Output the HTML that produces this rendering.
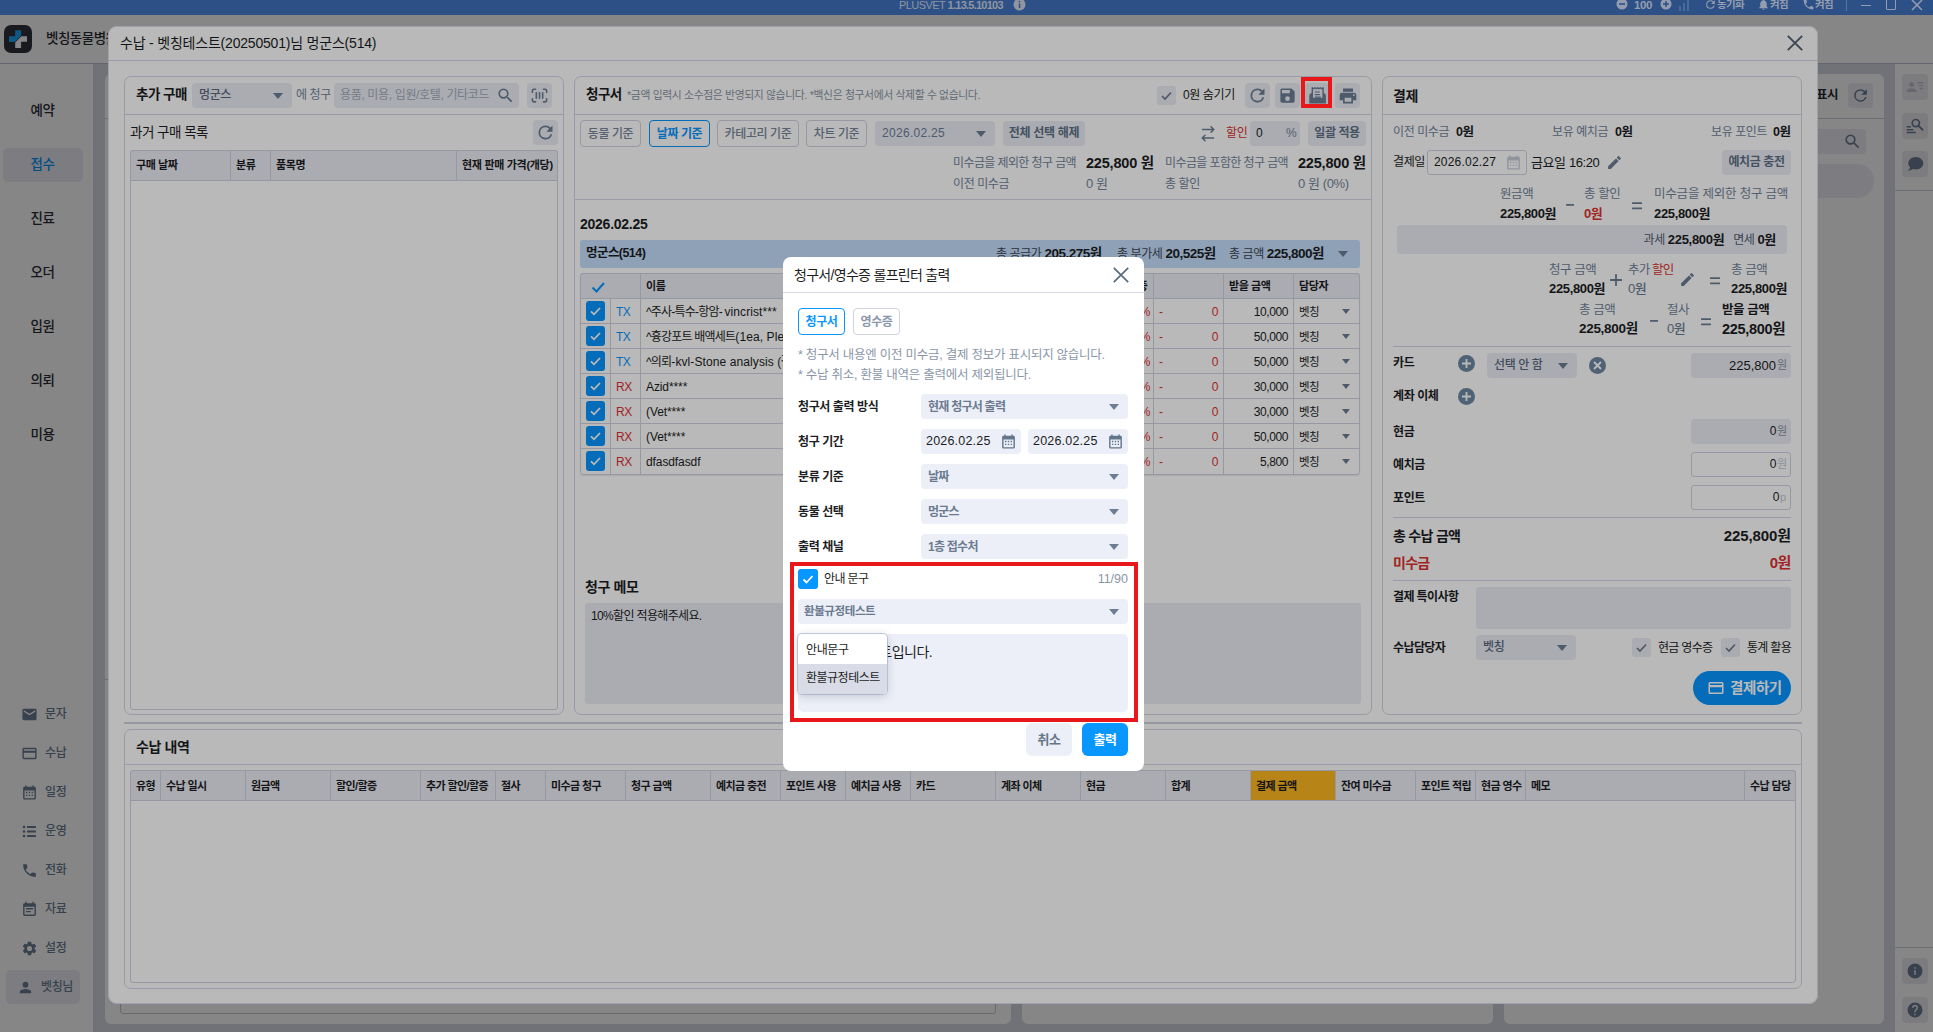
<!DOCTYPE html>
<html lang="ko">
<head>
<meta charset="utf-8">
<title>PLUSVET</title>
<style>
*{box-sizing:border-box;margin:0;padding:0}
html,body{width:1933px;height:1032px;overflow:hidden;background:#fff}
body{position:relative;font-family:"Liberation Sans","Noto Sans CJK KR",sans-serif;font-size:12px;color:#1c1e24;letter-spacing:-.4px;-webkit-font-smoothing:antialiased}
.a{position:absolute;white-space:nowrap}
.b{font-weight:700}
.m{font-weight:500}
.g{color:#72849b}
.r{color:#e03131}
.bl{color:#0896ff}
.ov{position:absolute;left:0;top:15px;width:1933px;height:1017px;background:rgba(0,0,0,.275)}
.panel{position:absolute;border:1px solid #d3d7e3;border-radius:7px;background:#fff}
.hl{position:absolute;height:1px;background:#d3d7e3}
.vl{position:absolute;width:1px;background:#d3d7e3}
.inp{position:absolute;background:#ecedf5;border-radius:4px}
.btn{position:absolute;background:#ecedf5;border-radius:4px;text-align:center;color:#5f7186;font-weight:700}
.obtn{position:absolute;border:1px solid #cfd3df;border-radius:4px;text-align:center;color:#7a8698;font-weight:500;background:#fff}
.th{position:absolute;background:#ecedf5;border:1px solid #cfd3df}
.tri{position:absolute;width:0;height:0;border-left:5px solid transparent;border-right:5px solid transparent;border-top:6px solid #6b7e95}
.tris{position:absolute;width:0;height:0;border-left:4px solid transparent;border-right:4px solid transparent;border-top:5px solid #6b7e95}
.cb{position:absolute;width:19px;height:19px;border-radius:3px;background:#0896ff}
.cb svg,.cbg svg{position:absolute;left:0;top:0}
.cbg{position:absolute;width:19px;height:19px;border-radius:3px;background:#ecedf5}
svg{display:block}
</style>
</head>
<body>
<!-- ===== native title bar ===== -->
<div class="a" style="left:0;top:0;width:1933px;height:15px;background:#2d5186;z-index:50;overflow:hidden">
  <div class="a" style="left:899px;top:-2.500px;font-size:11px;line-height:15px;color:#9095a0;letter-spacing:-.55px">PLUSVET <span class="b" style="letter-spacing:-.75px">1.13.5.10103</span></div>
  <svg class="a" style="left:1013px;top:-2px" width="13" height="13" viewBox="0 0 13 13"><circle cx="6.5" cy="6.5" r="6" fill="#9095a0"/><rect x="5.8" y="5.5" width="1.5" height="4.5" fill="#2d5186"/><circle cx="6.5" cy="3.6" r=".9" fill="#2d5186"/></svg>
  <svg class="a" style="left:1616px;top:-2px" width="12" height="12" viewBox="0 0 12 12"><circle cx="6" cy="6" r="5.5" fill="#949db0"/><rect x="3" y="5.2" width="6" height="1.6" fill="#2d5186"/></svg>
  <div class="a b" style="left:1634px;top:-2.500px;font-size:11.500px;line-height:15px;color:#949db0">100</div>
  <svg class="a" style="left:1660px;top:-2px" width="12" height="12" viewBox="0 0 12 12"><circle cx="6" cy="6" r="5.5" fill="#949db0"/><rect x="3" y="5.2" width="6" height="1.6" fill="#2d5186"/><rect x="5.2" y="3" width="1.6" height="6" fill="#2d5186"/></svg>
  <svg class="a" style="left:1679px;top:0" width="12" height="11" viewBox="0 0 12 11"><rect x="0" y="6" width="2" height="5" fill="#4a6a99"/><rect x="4" y="3" width="2" height="8" fill="#4a6a99"/><rect x="8" y="0" width="2" height="11" fill="#4a6a99"/></svg>
  <svg class="a" style="left:1704px;top:-2px" width="13" height="13" viewBox="0 0 24 24"><path d="M17.65 6.35A7.96 7.96 0 0 0 12 4a8 8 0 1 0 7.73 10h-2.08A6 6 0 1 1 12 6c1.66 0 3.14.69 4.22 1.78L13 11h7V4z" fill="#949db0"/></svg>
  <div class="a b" style="left:1717px;top:-3px;font-size:10.500px;line-height:15px;color:#949db0;letter-spacing:-.6px">동기화</div>
  <svg class="a" style="left:1757px;top:-2px" width="13" height="13" viewBox="0 0 24 24"><path d="M12 22a2 2 0 0 0 2-2h-4a2 2 0 0 0 2 2zm6-6v-5c0-3.07-1.64-5.64-4.5-6.32V4a1.5 1.5 0 0 0-3 0v.68C7.63 5.36 6 7.92 6 11v5l-2 2v1h16v-1z" fill="#949db0"/></svg>
  <div class="a b" style="left:1770px;top:-3px;font-size:10.500px;line-height:15px;color:#949db0;letter-spacing:-.6px">켜짐</div>
  <svg class="a" style="left:1802px;top:-2px" width="13" height="13" viewBox="0 0 24 24"><path d="M6.62 10.79a15.05 15.05 0 0 0 6.59 6.59l2.2-2.2a1 1 0 0 1 1.02-.24c1.12.37 2.33.57 3.57.57a1 1 0 0 1 1 1V20a1 1 0 0 1-1 1A17 17 0 0 1 3 4a1 1 0 0 1 1-1h3.5a1 1 0 0 1 1 1c0 1.25.2 2.45.57 3.57a1 1 0 0 1-.25 1.02z" fill="#949db0"/></svg>
  <div class="a b" style="left:1815px;top:-3px;font-size:10.500px;line-height:15px;color:#949db0;letter-spacing:-.6px">켜짐</div>
  <div class="a" style="left:1846px;top:0;width:1px;height:11px;background:#5776a3"></div>
  <div class="a" style="left:1861px;top:4.500px;width:10px;height:1.500px;background:#949db0"></div>
  <div class="a" style="left:1886px;top:-1px;width:10px;height:11px;border:1.500px solid #949db0;border-radius:1px"></div>
  <svg class="a" style="left:1911px;top:-1px" width="12" height="12" viewBox="0 0 12 12"><path d="M1 1L11 11M11 1L1 11" stroke="#949db0" stroke-width="1.5"/></svg>
</div>

<!-- ===== app behind ===== -->
<div class="a" style="left:0;top:15px;width:1933px;height:1017px;background:#fff">
  <!-- content bg -->
  <div class="a" style="left:93px;top:48px;width:1802px;height:969px;background:#d7d9e2"></div>
  <!-- header -->
  <div class="a" style="left:0;top:0;width:1933px;height:49px;background:#fff;border-bottom:1px solid #c3c6d2"></div>
  <div class="a" style="left:4px;top:10px;width:28px;height:28px;border-radius:7px;background:#30343e">
    <svg width="28" height="28" viewBox="0 0 28 28"><path d="M11.200 5.300h5.900v5.300L10.900 17.100H5v-5.900h6.200z" fill="#1ea7ff"/><path d="M23 11.200v5.600h-5.900V23h-5.900v-5.600l6.200-6.200z" fill="#fff"/></svg>
  </div>
  <div class="a m" style="left:46px;top:13px;font-size:13.500px;line-height:22px;color:#2a2d35;letter-spacing:-.5px">벳칭동물병원</div>
  <!-- left sidebar -->
  <div class="a" style="left:0;top:49px;width:93px;height:968px;background:#fff"></div>
  <div class="a" style="left:3px;top:133px;width:80px;height:34px;border-radius:5px;background:#ecedf5"></div>
  <div class="a m" style="left:0;top:85px;width:85px;text-align:center;font-size:13.500px;line-height:22px;color:#2a2d35">예약</div>
  <div class="a m" style="left:0;top:139px;width:85px;text-align:center;font-size:13.500px;line-height:22px;color:#0896ff">접수</div>
  <div class="a m" style="left:0;top:193px;width:85px;text-align:center;font-size:13.500px;line-height:22px;color:#2a2d35">진료</div>
  <div class="a m" style="left:0;top:247px;width:85px;text-align:center;font-size:13.500px;line-height:22px;color:#2a2d35">오더</div>
  <div class="a m" style="left:0;top:301px;width:85px;text-align:center;font-size:13.500px;line-height:22px;color:#2a2d35">입원</div>
  <div class="a m" style="left:0;top:355px;width:85px;text-align:center;font-size:13.500px;line-height:22px;color:#2a2d35">의뢰</div>
  <div class="a m" style="left:0;top:409px;width:85px;text-align:center;font-size:13.500px;line-height:22px;color:#2a2d35">미용</div>
  <!-- bottom nav -->
  <div class="a" style="left:6px;top:955px;width:74px;height:34px;border-radius:5px;background:#ecedf5"></div>
  <svg class="a" style="left:21px;top:691px" width="17" height="17" viewBox="0 0 24 24"><path d="M20 4H4a2 2 0 0 0-2 2v12a2 2 0 0 0 2 2h16a2 2 0 0 0 2-2V6a2 2 0 0 0-2-2zm0 4l-8 5-8-5V6l8 5 8-5z" fill="#6b7e95"/></svg>
  <div class="a m" style="left:45px;top:689px;font-size:12px;line-height:20px;color:#6b7e95">문자</div>
  <svg class="a" style="left:21px;top:730px" width="17" height="17" viewBox="0 0 24 24"><path d="M20 4H4a2 2 0 0 0-2 2v12a2 2 0 0 0 2 2h16a2 2 0 0 0 2-2V6a2 2 0 0 0-2-2zm0 14H4v-7h16zm0-10H4V6h16z" fill="#6b7e95"/></svg>
  <div class="a m" style="left:45px;top:728px;font-size:12px;line-height:20px;color:#6b7e95">수납</div>
  <svg class="a" style="left:21px;top:769px" width="17" height="17" viewBox="0 0 24 24"><path d="M19 4h-1V2h-2v2H8V2H6v2H5a2 2 0 0 0-2 2v14a2 2 0 0 0 2 2h14a2 2 0 0 0 2-2V6a2 2 0 0 0-2-2zm0 16H5V9h14zM7 11h2v2H7zm4 0h2v2h-2zm4 0h2v2h-2zM7 15h2v2H7zm4 0h2v2h-2zm4 0h2v2h-2z" fill="#6b7e95"/></svg>
  <div class="a m" style="left:45px;top:767px;font-size:12px;line-height:20px;color:#6b7e95">일정</div>
  <svg class="a" style="left:21px;top:808px" width="17" height="17" viewBox="0 0 17 17" fill="#6b7e95"><circle cx="3" cy="4" r="1.300"/><circle cx="3" cy="8.500" r="1.300"/><circle cx="3" cy="13" r="1.300"/><rect x="6" y="3.100" width="9" height="1.800" rx=".5"/><rect x="6" y="7.600" width="9" height="1.800" rx=".5"/><rect x="6" y="12.100" width="9" height="1.800" rx=".5"/></svg>
  <div class="a m" style="left:45px;top:806px;font-size:12px;line-height:20px;color:#6b7e95">운영</div>
  <svg class="a" style="left:21px;top:847px" width="17" height="17" viewBox="0 0 24 24"><path d="M6.62 10.79a15.05 15.05 0 0 0 6.59 6.59l2.2-2.2a1 1 0 0 1 1.02-.24c1.12.37 2.33.57 3.57.57a1 1 0 0 1 1 1V20a1 1 0 0 1-1 1A17 17 0 0 1 3 4a1 1 0 0 1 1-1h3.5a1 1 0 0 1 1 1c0 1.25.2 2.45.57 3.57a1 1 0 0 1-.25 1.02z" fill="#6b7e95"/></svg>
  <div class="a m" style="left:45px;top:845px;font-size:12px;line-height:20px;color:#6b7e95">전화</div>
  <svg class="a" style="left:21px;top:886px" width="17" height="17" viewBox="0 0 24 24"><path d="M19 3h-1V1h-2v2H8V1H6v2H5a2 2 0 0 0-2 2v14a2 2 0 0 0 2 2h14a2 2 0 0 0 2-2V5a2 2 0 0 0-2-2zm0 16H5V8h14zM7 10h10v2H7zm0 4h7v2H7z" fill="#6b7e95"/></svg>
  <div class="a m" style="left:45px;top:884px;font-size:12px;line-height:20px;color:#6b7e95">자료</div>
  <svg class="a" style="left:21px;top:925px" width="17" height="17" viewBox="0 0 24 24"><path d="M19.14 12.94a7.07 7.07 0 0 0 0-1.88l2.03-1.58a.5.5 0 0 0 .12-.61l-1.92-3.32a.5.5 0 0 0-.59-.22l-2.39.96a7.03 7.03 0 0 0-1.62-.94l-.36-2.54a.48.48 0 0 0-.48-.41h-3.84a.48.48 0 0 0-.47.41l-.36 2.54c-.59.24-1.13.57-1.62.94l-2.39-.96a.5.5 0 0 0-.59.22L2.74 8.87a.48.48 0 0 0 .12.61l2.03 1.58a7.07 7.07 0 0 0 0 1.88l-2.03 1.58a.5.5 0 0 0-.12.61l1.92 3.32c.12.22.37.29.59.22l2.39-.96c.5.38 1.03.7 1.62.94l.36 2.54c.05.24.24.41.48.41h3.84c.24 0 .44-.17.47-.41l.36-2.54c.59-.24 1.13-.56 1.62-.94l2.39.96c.22.08.47 0 .59-.22l1.92-3.32a.5.5 0 0 0-.12-.61zM12 15.6a3.6 3.6 0 1 1 0-7.2 3.6 3.6 0 0 1 0 7.2z" fill="#6b7e95"/></svg>
  <div class="a m" style="left:45px;top:923px;font-size:12px;line-height:20px;color:#6b7e95">설정</div>
  <svg class="a" style="left:17px;top:964px" width="17" height="17" viewBox="0 0 24 24"><path d="M12 12a4 4 0 1 0 0-8 4 4 0 0 0 0 8zm0 2c-2.67 0-8 1.34-8 4v2h16v-2c0-2.66-5.33-4-8-4z" fill="#6b7e95"/></svg>
  <div class="a m" style="left:41px;top:962px;font-size:12px;line-height:20px;color:#6b7e95">벳칭님</div>

  <!-- content cards behind -->
  <div class="a" style="left:105px;top:59px;width:906px;height:950px;border-radius:6px;background:#fff"></div>
  <div class="a" style="left:105px;top:103px;width:20px;height:1px;background:#cdd0da"></div>
  <div class="a" style="left:105px;top:664px;width:20px;height:1px;background:#cdd0da"></div>
  <div class="a" style="left:120px;top:600px;width:876px;height:399px;border:1px solid #c4c8d3;border-radius:3px"></div>
  <div class="a" style="left:1022px;top:59px;width:471px;height:950px;border-radius:6px;background:#fff"></div>
  <div class="a" style="left:1504px;top:59px;width:380px;height:950px;border-radius:6px;background:#fff"></div>
  <div class="a" style="left:1504px;top:103px;width:380px;height:1px;background:#cdd0da"></div>
  <div class="a b" style="left:1816px;top:69px;font-size:12.500px;line-height:22px;color:#2a2d35;letter-spacing:-.6px">표시</div>
  <div class="a" style="left:1848px;top:68px;width:25px;height:25px;border-radius:4px;background:#ecedf5"></div>
  <svg class="a" style="left:1851px;top:71px" width="19" height="19" viewBox="0 0 24 24"><path d="M17.65 6.35A7.96 7.96 0 0 0 12 4a8 8 0 1 0 7.73 10h-2.08A6 6 0 1 1 12 6c1.66 0 3.14.69 4.22 1.78L13 11h7V4z" fill="#6b7e95"/></svg>
  <div class="a" style="left:1800px;top:114px;width:66px;height:25px;border-radius:4px;background:#ecedf5"></div>
  <svg class="a" style="left:1843px;top:117px" width="19" height="19" viewBox="0 0 24 24"><path d="M15.5 14h-.79l-.28-.27A6.47 6.47 0 0 0 16 9.5 6.5 6.5 0 1 0 9.5 16c1.61 0 3.09-.59 4.23-1.57l.27.28v.79l5 4.99L20.49 19zm-6 0C7.01 14 5 11.99 5 9.500S7.01 5 9.500 5 14 7.010 14 9.500 11.990 14 9.500 14z" fill="#6b7e95"/></svg>
  <div class="a" style="left:1780px;top:149px;width:94px;height:34px;border-radius:17px;background:#ecedf5"></div>

  <!-- right sidebar -->
  <div class="a" style="left:1895px;top:49px;width:38px;height:968px;background:#fff"></div>
  <div class="a" style="left:1902px;top:59px;width:26px;height:26px;border-radius:4px;background:#eceef3"></div>
  <svg class="a" style="left:1905px;top:62px" width="20" height="20" viewBox="0 0 24 24"><path d="M8 12a3 3 0 1 0 0-6 3 3 0 0 0 0 6zm0 1.500c-2 0-6 1-6 3V18h12v-1.500c0-2-4-3-6-3zM15 6h7v1.700h-7zm1.500 3.500H22v1.700h-5.500zm1 3.500H22v1.700h-4.500z" fill="#c4c7d0"/></svg>
  <div class="a" style="left:1902px;top:98px;width:26px;height:26px;border-radius:4px;background:#eceef3"></div>
  <svg class="a" style="left:1905px;top:101px" width="20" height="20" viewBox="0 0 24 24"><path d="M2 12h5v1.800H2zm0 3.500h8v1.800H2zm0 3.500h11v1.800H2z" fill="#6b7e95"/><circle cx="13" cy="8.500" r="4.300" fill="none" stroke="#6b7e95" stroke-width="2"/><path d="M16 11.500l5 5" stroke="#6b7e95" stroke-width="2.200" stroke-linecap="round"/></svg>
  <div class="a" style="left:1902px;top:136px;width:26px;height:26px;border-radius:4px;background:#eceef3"></div>
  <svg class="a" style="left:1905px;top:139px" width="20" height="20" viewBox="0 0 24 24"><path d="M13 3.500c-5 0-9 3.400-9 7.600 0 1.900.8 3.600 2.100 4.900-.3 1.500-1.100 2.800-2.600 3.800 2.400.1 4.400-.6 5.800-1.800 1.100.4 2.400.6 3.700.6 5 0 9-3.400 9-7.500s-4-7.600-9-7.600z" fill="#6c7d94"/></svg>
  <div class="a" style="left:1895px;top:175px;width:38px;height:1px;background:#cdd0da"></div>
  <div class="a" style="left:1895px;top:932px;width:38px;height:1px;background:#cdd0da"></div>
  <div class="a" style="left:1902px;top:943px;width:26px;height:26px;border-radius:4px;background:#eceef3"></div>
  <svg class="a" style="left:1906px;top:947px" width="18" height="18" viewBox="0 0 24 24"><path d="M12 2a10 10 0 1 0 0 20 10 10 0 0 0 0-20zm1 15h-2v-6h2zm0-8h-2V7h2z" fill="#6c7d94"/></svg>
  <div class="a" style="left:1902px;top:982px;width:26px;height:26px;border-radius:4px;background:#eceef3"></div>
  <svg class="a" style="left:1906px;top:986px" width="18" height="18" viewBox="0 0 24 24"><path d="M12 2a10 10 0 1 0 0 20 10 10 0 0 0 0-20zm1 17h-2v-2h2zm2.070-7.750l-.9.920C13.450 12.900 13 13.500 13 15h-2v-.500c0-1.100.45-2.100 1.170-2.830l1.240-1.260A2 2 0 0 0 14 9a2 2 0 0 0-4 0H8a4 4 0 0 1 8 0c0 .880-.36 1.680-.930 2.250z" fill="#6c7d94"/></svg>
</div>
<div class="ov"></div>
<!-- ===== main modal ===== -->
<div class="a" style="left:108px;top:26px;width:1710px;height:978px;background:#fff;border-radius:9px;box-shadow:inset 0 0 0 1px #dde0ec">
<div class="a" style="left:-108px;top:-26px;width:0;height:0">

  <div class="a" style="left:120px;top:32px;font-size:14px;line-height:22px;color:#1c1e24;letter-spacing:-.2px">수납 - 벳칭테스트(20250501)님 멍군스(514)</div>
  <svg class="a" style="left:1787px;top:35px" width="16" height="16" viewBox="0 0 16 16"><path d="M.800 .800l14.400 14.400M15.200 .800L.800 15.200" stroke="#526171" stroke-width="1.900"/></svg>
  <div class="hl" style="left:108px;top:60px;width:1709px"></div>

  <!-- ===== panel 1 : 추가 구매 ===== -->
  <div class="panel" style="left:124px;top:76px;width:440px;height:639px"></div>
  <div class="a b" style="left:136px;top:84px;font-size:13.500px;line-height:22px;letter-spacing:-.5px">추가 구매</div>
  <div class="inp" style="left:192px;top:83px;width:100px;height:25px"></div>
  <div class="a m" style="left:199px;top:85px;font-size:12px;line-height:20px;color:#5a6a80">멍군스</div>
  <div class="tri" style="left:273px;top:93px"></div>
  <div class="a g" style="left:296px;top:85px;font-size:12px;line-height:20px">에 청구</div>
  <div class="inp" style="left:334px;top:83px;width:185px;height:25px"></div>
  <div class="a" style="left:340px;top:85px;font-size:12px;line-height:20px;color:#a2abb9;letter-spacing:-.35px">용품, 미용, 입원/호텔, 기타코드</div>
  <svg class="a" style="left:496px;top:86px" width="19" height="19" viewBox="0 0 24 24"><path d="M15.500 14h-.790l-.280-.270A6.470 6.470 0 0 0 16 9.500 6.500 6.500 0 1 0 9.500 16c1.610 0 3.090-.590 4.230-1.570l.270.280v.790l5 4.990L20.490 19zm-6 0C7.010 14 5 11.990 5 9.500S7.010 5 9.500 5 14 7.010 14 9.500 11.990 14 9.500 14z" fill="#6b7e95"/></svg>
  <div class="inp" style="left:527px;top:83px;width:25px;height:25px"></div>
  <svg class="a" style="left:530px;top:86px" width="19" height="19" viewBox="0 0 24 24" fill="none" stroke="#6b7e95" stroke-width="2" stroke-linecap="round"><path d="M7 4H5a2 2 0 0 0-2 2v2M17 4h2a2 2 0 0 1 2 2v2M7 20H5a2 2 0 0 1-2-2v-2M17 20h2a2 2 0 0 0 2-2v-2M8 8.500v7M12 8.500v7M16 8.500v7"/></svg>
  <div class="hl" style="left:125px;top:114px;width:438px"></div>
  <div class="a" style="left:130px;top:122px;font-size:13.500px;line-height:22px;letter-spacing:-.5px">과거 구매 목록</div>
  <div class="inp" style="left:533px;top:120px;width:25px;height:25px"></div>
  <svg class="a" style="left:535px;top:122px" width="21" height="21" viewBox="0 0 24 24"><path d="M17.650 6.350A7.960 7.960 0 0 0 12 4a8 8 0 1 0 7.730 10h-2.080A6 6 0 1 1 12 6c1.660 0 3.140.690 4.220 1.780L13 11h7V4z" fill="#6b7e95"/></svg>
  <div class="a" style="left:130px;top:150px;width:428px;height:560px;border:1px solid #cfd3df;border-radius:3px"></div>
  <div class="th" style="left:130px;top:150px;width:428px;height:31px;border-radius:3px 3px 0 0"></div>
  <div class="vl" style="left:230px;top:151px;height:29px;background:#cfd3df"></div>
  <div class="vl" style="left:270px;top:151px;height:29px;background:#cfd3df"></div>
  <div class="vl" style="left:456px;top:151px;height:29px;background:#cfd3df"></div>
  <div class="a b" style="left:136px;top:155px;font-size:11px;line-height:20px">구매 날짜</div>
  <div class="a b" style="left:236px;top:155px;font-size:11px;line-height:20px">분류</div>
  <div class="a b" style="left:276px;top:155px;font-size:11px;line-height:20px">품목명</div>
  <div class="a b" style="left:462px;top:155px;font-size:11px;line-height:20px;letter-spacing:-.3px">현재 판매 가격(개당)</div>

  <!-- ===== panel 2 : 청구서 ===== -->
  <div class="panel" style="left:574px;top:76px;width:798px;height:639px"></div>
  <div class="a b" style="left:586px;top:84px;font-size:13.500px;line-height:22px;letter-spacing:-.5px">청구서</div>
  <div class="a g" style="left:627px;top:85px;font-size:10.800px;line-height:20px;letter-spacing:-.35px;color:#8a93a3">*금액 입력시 소수점은 반영되지 않습니다. *백신은 청구서에서 삭제할 수 없습니다.</div>
  <div class="cbg" style="left:1157px;top:86px"><svg width="19" height="19" viewBox="0 0 19 19"><path d="M5 10l3 3 6-6.500" fill="none" stroke="#6b7788" stroke-width="1.600"/></svg></div>
  <div class="a" style="left:1183px;top:85px;font-size:12px;line-height:20px">0원 숨기기</div>
  <div class="inp" style="left:1245px;top:83px;width:25px;height:25px"></div>
  <svg class="a" style="left:1247px;top:85px" width="21" height="21" viewBox="0 0 24 24"><path d="M17.650 6.350A7.960 7.960 0 0 0 12 4a8 8 0 1 0 7.730 10h-2.080A6 6 0 1 1 12 6c1.660 0 3.140.690 4.220 1.780L13 11h7V4z" fill="#6b7e95"/></svg>
  <div class="inp" style="left:1275px;top:83px;width:25px;height:25px"></div>
  <svg class="a" style="left:1278px;top:86px" width="19" height="19" viewBox="0 0 24 24"><path d="M17 3H5a2 2 0 0 0-2 2v14a2 2 0 0 0 2 2h14a2 2 0 0 0 2-2V7zm-5 16a3 3 0 1 1 0-6 3 3 0 0 1 0 6zm3-10H5V5h10z" fill="#6b7e95"/></svg>
  <div class="inp" style="left:1305px;top:83px;width:25px;height:25px"></div>
  <svg class="a" style="left:1304px;top:83px" width="25" height="25" viewBox="0 0 25 25"><path d="M5.300 20.400V13.200a3.200 3.200 0 0 1 3.200-3.200h10.200a3.200 3.200 0 0 1 3.200 3.200v7.200z" fill="#6b7e95"/><path d="M8.300 15.400V4.800l1.350 1 1.350-1 1.350 1 1.350-1 1.350 1 1.350-1 1.350 1 1.350-1v10.600z" fill="#ecedf5" stroke="#6b7e95" stroke-width="1.400" stroke-linejoin="round"/><path d="M10.800 9h5M10.800 11.600h5M10.800 14.200h6" stroke="#6b7e95" stroke-width="1.200"/></svg>
  <div class="inp" style="left:1335px;top:83px;width:25px;height:25px"></div>
  <svg class="a" style="left:1337.500px;top:85.500px" width="20" height="20" viewBox="0 0 24 24"><path d="M19 8H5a3 3 0 0 0-3 3v6h4v4h12v-4h4v-6a3 3 0 0 0-3-3zm-3 11H8v-5h8zm3-7a1 1 0 1 1 0-2 1 1 0 0 1 0 2zm-1-9H6v4h12z" fill="#6b7e95"/></svg>
  <div class="hl" style="left:575px;top:114px;width:796px"></div>

  <div class="obtn" style="left:580px;top:120px;width:61px;height:27px;font-size:12px;line-height:26.500px">동물 기준</div>
  <div class="obtn b" style="left:649px;top:120px;width:61px;height:27px;font-size:12px;line-height:26.500px;border-color:#0896ff;color:#0896ff;font-weight:700">날짜 기준</div>
  <div class="obtn" style="left:717px;top:120px;width:82px;height:27px;font-size:12px;line-height:26.500px">카테고리 기준</div>
  <div class="obtn" style="left:806px;top:120px;width:61px;height:27px;font-size:12px;line-height:26.500px">차트 기준</div>
  <div class="inp" style="left:875px;top:121px;width:120px;height:25px"></div>
  <div class="a m" style="left:882px;top:123px;font-size:12px;line-height:21px;color:#6b7e95;letter-spacing:.3px">2026.02.25</div>
  <div class="tri" style="left:976px;top:131px"></div>
  <div class="btn" style="left:1003px;top:121px;width:82px;height:25px;font-size:12px;line-height:24px;letter-spacing:-.3px">전체 선택 해제</div>
  <svg class="a" style="left:1200px;top:125px" width="16" height="18" viewBox="0 0 16 18" fill="none" stroke="#6b7e95" stroke-width="1.500" stroke-linecap="round" stroke-linejoin="round"><path d="M2.500 4.500h11.300M11 1.700l2.800 2.800-2.800 2.800M13.500 13H2.200M5 10.200L2.200 13 5 15.800"/></svg>
  <div class="a r" style="left:1226px;top:123px;font-size:12px;line-height:20px">할인</div>
  <div class="inp" style="left:1250px;top:121px;width:50px;height:25px"></div>
  <div class="a" style="left:1256px;top:123px;font-size:12px;line-height:21px">0</div>
  <div class="a g" style="left:1286px;top:123px;font-size:12px;line-height:21px;letter-spacing:0">%</div>
  <div class="btn" style="left:1308px;top:121px;width:58px;height:25px;font-size:12px;line-height:24px">일괄 적용</div>

  <div class="a g" style="left:953px;top:153px;font-size:12px;line-height:20px;letter-spacing:-.6px">미수금을 제외한 청구 금액</div>
  <div class="a b" style="left:1086px;top:152px;font-size:14.500px;line-height:22px;letter-spacing:-.2px">225,800 원</div>
  <div class="a g" style="left:1165px;top:153px;font-size:12px;line-height:20px;letter-spacing:-.6px">미수금을 포함한 청구 금액</div>
  <div class="a b" style="left:1298px;top:152px;font-size:14.500px;line-height:22px;letter-spacing:-.2px">225,800 원</div>
  <div class="a g" style="left:953px;top:174px;font-size:12px;line-height:20px">이전 미수금</div>
  <div class="a g" style="left:1086px;top:173px;font-size:13px;line-height:21px">0 원</div>
  <div class="a g" style="left:1165px;top:174px;font-size:12px;line-height:20px">총 할인</div>
  <div class="a g" style="left:1298px;top:173px;font-size:13px;line-height:21px">0 원 (0%)</div>
  <div class="hl" style="left:575px;top:199px;width:796px"></div>

  <div class="a b" style="left:580px;top:213px;font-size:14px;line-height:22px;letter-spacing:-.25px">2026.02.25</div>
  <div class="a" style="left:580px;top:240px;width:780px;height:28px;border-radius:3px;background:#c5defd"></div>
  <div class="a b" style="left:586px;top:243px;font-size:12.500px;line-height:21px;letter-spacing:-.55px">멍군스(514)</div>
  <div class="a" style="left:996px;top:243px;font-size:12px;line-height:21px;color:#3d4654">총 공급가 <span class="b" style="font-size:13.500px;color:#1c1e24;letter-spacing:-.5px">205,275원</span></div>
  <div class="a" style="left:1117px;top:243px;font-size:12px;line-height:21px;color:#3d4654">총 부가세 <span class="b" style="font-size:13.500px;color:#1c1e24;letter-spacing:-.5px">20,525원</span></div>
  <div class="a" style="left:1229px;top:243px;font-size:12px;line-height:21px;color:#3d4654">총 금액 <span class="b" style="font-size:13.500px;color:#1c1e24;letter-spacing:-.5px">225,800원</span></div>
  <div class="tri" style="left:1338px;top:251px"></div>
  <!-- bill table -->
  <div class="a" style="left:580px;top:273px;width:780px;height:202px;border:1px solid #cfd3df;border-radius:3px;box-shadow:0 1px 1px rgba(0,0,0,.08)"></div>
  <div class="th" style="left:580px;top:273px;width:780px;height:26px;border-radius:3px 3px 0 0"></div>
  <div class="vl" style="left:640px;top:274px;height:200px;background:#cfd3df"></div>
  <div class="vl" style="left:860px;top:274px;height:200px;background:#cfd3df"></div>
  <div class="vl" style="left:930px;top:274px;height:200px;background:#cfd3df"></div>
  <div class="vl" style="left:980px;top:274px;height:200px;background:#cfd3df"></div>
  <div class="vl" style="left:1100px;top:274px;height:200px;background:#cfd3df"></div>
  <div class="vl" style="left:1153px;top:274px;height:200px;background:#cfd3df"></div>
  <div class="vl" style="left:1223px;top:274px;height:200px;background:#cfd3df"></div>
  <div class="vl" style="left:1293px;top:274px;height:200px;background:#cfd3df"></div>
  <div class="vl" style="left:610px;top:299px;height:175px;background:#cfd3df"></div>
  <svg class="a" style="left:589px;top:278px" width="18" height="18" viewBox="0 0 18 18"><path d="M3.500 9.500l4 4L15 5" fill="none" stroke="#0896ff" stroke-width="2"/></svg>
  <div class="a b" style="left:646px;top:276px;font-size:11px;line-height:20px">이름</div>
  <div class="a b" style="left:866px;top:276px;font-size:11px;line-height:20px">단가</div>
  <div class="a b" style="left:936px;top:276px;font-size:11px;line-height:20px">수량</div>
  <div class="a b" style="left:986px;top:276px;font-size:11px;line-height:20px">금액</div>
  <div class="a b" style="left:1106px;top:276px;font-size:11px;line-height:20px">할인/할증</div>
  <div class="a b" style="left:1229px;top:276px;font-size:11px;line-height:20px">받을 금액</div>
  <div class="a b" style="left:1299px;top:276px;font-size:11px;line-height:20px">담당자</div>
  <div class="cb" style="left:586px;top:301px;height:20px"><svg width="19" height="20" viewBox="0 0 19 20"><path d="M5 10.300l3 3L14 7" fill="none" stroke="#fff" stroke-width="1.800"/></svg></div>
  <div class="a" style="left:616px;top:302px;font-size:12px;line-height:20px;color:#0896ff;letter-spacing:-.5px">TX</div>
  <div class="a" style="left:646px;top:302px;width:210px;overflow:hidden;font-size:12px;line-height:20px;letter-spacing:-.8px">^주사-특수-항암- <span style="letter-spacing:.1px">vincrist***</span></div>
  <div class="a" style="left:866px;top:302px;width:58px;text-align:right;font-size:12px;line-height:20px">10,000</div>
  <div class="a" style="left:936px;top:302px;width:38px;text-align:right;font-size:12px;line-height:20px">1</div>
  <div class="a" style="left:986px;top:302px;width:68px;text-align:right;font-size:12px;line-height:20px">10,000</div>
  <div class="a r" style="left:1106px;top:302px;font-size:12px;line-height:20px">-</div>
  <div class="a r" style="left:1102px;top:302px;width:48px;text-align:right;font-size:12px;line-height:20px">0 %</div>
  <div class="a r" style="left:1159px;top:302px;font-size:12px;line-height:20px">-</div>
  <div class="a r" style="left:1180px;top:302px;width:38px;text-align:right;font-size:12px;line-height:20px">0</div>
  <div class="a" style="left:1230px;top:302px;width:58px;text-align:right;font-size:12px;line-height:20px">10,000</div>
  <div class="a" style="left:1299px;top:302px;font-size:11.500px;line-height:20px;letter-spacing:-.5px">벳칭</div>
  <div class="tris" style="left:1342px;top:309px"></div>
  <div class="hl" style="left:581px;top:323px;width:778px;background:#cfd3df"></div>
  <div class="cb" style="left:586px;top:326px;height:20px"><svg width="19" height="20" viewBox="0 0 19 20"><path d="M5 10.300l3 3L14 7" fill="none" stroke="#fff" stroke-width="1.800"/></svg></div>
  <div class="a" style="left:616px;top:327px;font-size:12px;line-height:20px;color:#0896ff;letter-spacing:-.5px">TX</div>
  <div class="a" style="left:646px;top:327px;width:210px;overflow:hidden;font-size:12px;line-height:20px;letter-spacing:-.8px">^흉강포트 배액세트<span style="letter-spacing:.1px">(1ea, Pleural drainage set)</span></div>
  <div class="a" style="left:866px;top:327px;width:58px;text-align:right;font-size:12px;line-height:20px">50,000</div>
  <div class="a" style="left:936px;top:327px;width:38px;text-align:right;font-size:12px;line-height:20px">1</div>
  <div class="a" style="left:986px;top:327px;width:68px;text-align:right;font-size:12px;line-height:20px">50,000</div>
  <div class="a r" style="left:1106px;top:327px;font-size:12px;line-height:20px">-</div>
  <div class="a r" style="left:1102px;top:327px;width:48px;text-align:right;font-size:12px;line-height:20px">0 %</div>
  <div class="a r" style="left:1159px;top:327px;font-size:12px;line-height:20px">-</div>
  <div class="a r" style="left:1180px;top:327px;width:38px;text-align:right;font-size:12px;line-height:20px">0</div>
  <div class="a" style="left:1230px;top:327px;width:58px;text-align:right;font-size:12px;line-height:20px">50,000</div>
  <div class="a" style="left:1299px;top:327px;font-size:11.500px;line-height:20px;letter-spacing:-.5px">벳칭</div>
  <div class="tris" style="left:1342px;top:334px"></div>
  <div class="hl" style="left:581px;top:348px;width:778px;background:#cfd3df"></div>
  <div class="cb" style="left:586px;top:351px;height:20px"><svg width="19" height="20" viewBox="0 0 19 20"><path d="M5 10.300l3 3L14 7" fill="none" stroke="#fff" stroke-width="1.800"/></svg></div>
  <div class="a" style="left:616px;top:352px;font-size:12px;line-height:20px;color:#0896ff;letter-spacing:-.5px">TX</div>
  <div class="a" style="left:646px;top:352px;width:210px;overflow:hidden;font-size:12px;line-height:20px;letter-spacing:-.8px">^의뢰<span style="letter-spacing:.1px">-kvl-Stone analysis </span>(결석분석)</div>
  <div class="a" style="left:866px;top:352px;width:58px;text-align:right;font-size:12px;line-height:20px">50,000</div>
  <div class="a" style="left:936px;top:352px;width:38px;text-align:right;font-size:12px;line-height:20px">1</div>
  <div class="a" style="left:986px;top:352px;width:68px;text-align:right;font-size:12px;line-height:20px">50,000</div>
  <div class="a r" style="left:1106px;top:352px;font-size:12px;line-height:20px">-</div>
  <div class="a r" style="left:1102px;top:352px;width:48px;text-align:right;font-size:12px;line-height:20px">0 %</div>
  <div class="a r" style="left:1159px;top:352px;font-size:12px;line-height:20px">-</div>
  <div class="a r" style="left:1180px;top:352px;width:38px;text-align:right;font-size:12px;line-height:20px">0</div>
  <div class="a" style="left:1230px;top:352px;width:58px;text-align:right;font-size:12px;line-height:20px">50,000</div>
  <div class="a" style="left:1299px;top:352px;font-size:11.500px;line-height:20px;letter-spacing:-.5px">벳칭</div>
  <div class="tris" style="left:1342px;top:359px"></div>
  <div class="hl" style="left:581px;top:373px;width:778px;background:#cfd3df"></div>
  <div class="cb" style="left:586px;top:376px;height:20px"><svg width="19" height="20" viewBox="0 0 19 20"><path d="M5 10.300l3 3L14 7" fill="none" stroke="#fff" stroke-width="1.800"/></svg></div>
  <div class="a" style="left:616px;top:377px;font-size:12px;line-height:20px;color:#e03131;letter-spacing:-.5px">RX</div>
  <div class="a" style="left:646px;top:377px;width:210px;overflow:hidden;font-size:12px;line-height:20px;letter-spacing:-.1px">Azid****</div>
  <div class="a" style="left:866px;top:377px;width:58px;text-align:right;font-size:12px;line-height:20px">30,000</div>
  <div class="a" style="left:936px;top:377px;width:38px;text-align:right;font-size:12px;line-height:20px">1</div>
  <div class="a" style="left:986px;top:377px;width:68px;text-align:right;font-size:12px;line-height:20px">30,000</div>
  <div class="a r" style="left:1106px;top:377px;font-size:12px;line-height:20px">-</div>
  <div class="a r" style="left:1102px;top:377px;width:48px;text-align:right;font-size:12px;line-height:20px">0 %</div>
  <div class="a r" style="left:1159px;top:377px;font-size:12px;line-height:20px">-</div>
  <div class="a r" style="left:1180px;top:377px;width:38px;text-align:right;font-size:12px;line-height:20px">0</div>
  <div class="a" style="left:1230px;top:377px;width:58px;text-align:right;font-size:12px;line-height:20px">30,000</div>
  <div class="a" style="left:1299px;top:377px;font-size:11.500px;line-height:20px;letter-spacing:-.5px">벳칭</div>
  <div class="tris" style="left:1342px;top:384px"></div>
  <div class="hl" style="left:581px;top:398px;width:778px;background:#cfd3df"></div>
  <div class="cb" style="left:586px;top:401px;height:20px"><svg width="19" height="20" viewBox="0 0 19 20"><path d="M5 10.300l3 3L14 7" fill="none" stroke="#fff" stroke-width="1.800"/></svg></div>
  <div class="a" style="left:616px;top:402px;font-size:12px;line-height:20px;color:#e03131;letter-spacing:-.5px">RX</div>
  <div class="a" style="left:646px;top:402px;width:210px;overflow:hidden;font-size:12px;line-height:20px;letter-spacing:-.1px">(Vet****</div>
  <div class="a" style="left:866px;top:402px;width:58px;text-align:right;font-size:12px;line-height:20px">30,000</div>
  <div class="a" style="left:936px;top:402px;width:38px;text-align:right;font-size:12px;line-height:20px">1</div>
  <div class="a" style="left:986px;top:402px;width:68px;text-align:right;font-size:12px;line-height:20px">30,000</div>
  <div class="a r" style="left:1106px;top:402px;font-size:12px;line-height:20px">-</div>
  <div class="a r" style="left:1102px;top:402px;width:48px;text-align:right;font-size:12px;line-height:20px">0 %</div>
  <div class="a r" style="left:1159px;top:402px;font-size:12px;line-height:20px">-</div>
  <div class="a r" style="left:1180px;top:402px;width:38px;text-align:right;font-size:12px;line-height:20px">0</div>
  <div class="a" style="left:1230px;top:402px;width:58px;text-align:right;font-size:12px;line-height:20px">30,000</div>
  <div class="a" style="left:1299px;top:402px;font-size:11.500px;line-height:20px;letter-spacing:-.5px">벳칭</div>
  <div class="tris" style="left:1342px;top:409px"></div>
  <div class="hl" style="left:581px;top:423px;width:778px;background:#cfd3df"></div>
  <div class="cb" style="left:586px;top:426px;height:20px"><svg width="19" height="20" viewBox="0 0 19 20"><path d="M5 10.300l3 3L14 7" fill="none" stroke="#fff" stroke-width="1.800"/></svg></div>
  <div class="a" style="left:616px;top:427px;font-size:12px;line-height:20px;color:#e03131;letter-spacing:-.5px">RX</div>
  <div class="a" style="left:646px;top:427px;width:210px;overflow:hidden;font-size:12px;line-height:20px;letter-spacing:-.1px">(Vet****</div>
  <div class="a" style="left:866px;top:427px;width:58px;text-align:right;font-size:12px;line-height:20px">50,000</div>
  <div class="a" style="left:936px;top:427px;width:38px;text-align:right;font-size:12px;line-height:20px">1</div>
  <div class="a" style="left:986px;top:427px;width:68px;text-align:right;font-size:12px;line-height:20px">50,000</div>
  <div class="a r" style="left:1106px;top:427px;font-size:12px;line-height:20px">-</div>
  <div class="a r" style="left:1102px;top:427px;width:48px;text-align:right;font-size:12px;line-height:20px">0 %</div>
  <div class="a r" style="left:1159px;top:427px;font-size:12px;line-height:20px">-</div>
  <div class="a r" style="left:1180px;top:427px;width:38px;text-align:right;font-size:12px;line-height:20px">0</div>
  <div class="a" style="left:1230px;top:427px;width:58px;text-align:right;font-size:12px;line-height:20px">50,000</div>
  <div class="a" style="left:1299px;top:427px;font-size:11.500px;line-height:20px;letter-spacing:-.5px">벳칭</div>
  <div class="tris" style="left:1342px;top:434px"></div>
  <div class="hl" style="left:581px;top:448px;width:778px;background:#cfd3df"></div>
  <div class="cb" style="left:586px;top:451px;height:20px"><svg width="19" height="20" viewBox="0 0 19 20"><path d="M5 10.300l3 3L14 7" fill="none" stroke="#fff" stroke-width="1.800"/></svg></div>
  <div class="a" style="left:616px;top:452px;font-size:12px;line-height:20px;color:#e03131;letter-spacing:-.5px">RX</div>
  <div class="a" style="left:646px;top:452px;width:210px;overflow:hidden;font-size:12px;line-height:20px;letter-spacing:-.1px">dfasdfasdf</div>
  <div class="a" style="left:866px;top:452px;width:58px;text-align:right;font-size:12px;line-height:20px">5,800</div>
  <div class="a" style="left:936px;top:452px;width:38px;text-align:right;font-size:12px;line-height:20px">1</div>
  <div class="a" style="left:986px;top:452px;width:68px;text-align:right;font-size:12px;line-height:20px">5,800</div>
  <div class="a r" style="left:1106px;top:452px;font-size:12px;line-height:20px">-</div>
  <div class="a r" style="left:1102px;top:452px;width:48px;text-align:right;font-size:12px;line-height:20px">0 %</div>
  <div class="a r" style="left:1159px;top:452px;font-size:12px;line-height:20px">-</div>
  <div class="a r" style="left:1180px;top:452px;width:38px;text-align:right;font-size:12px;line-height:20px">0</div>
  <div class="a" style="left:1230px;top:452px;width:58px;text-align:right;font-size:12px;line-height:20px">5,800</div>
  <div class="a" style="left:1299px;top:452px;font-size:11.500px;line-height:20px;letter-spacing:-.5px">벳칭</div>
  <div class="tris" style="left:1342px;top:459px"></div>
  <!-- memo -->
  <div class="a b" style="left:585px;top:576px;font-size:14px;line-height:22px">청구 메모</div>
  <div class="a" style="left:585px;top:603px;width:776px;height:101px;border-radius:3px;background:#ecedf5"></div>
  <div class="a" style="left:591px;top:606px;font-size:12px;line-height:20px;letter-spacing:-.65px">10%할인 적용해주세요.</div>

  <!-- ===== panel 3 : 결제 ===== -->
  <div class="panel" style="left:1382px;top:76px;width:420px;height:639px"></div>
  <div class="a b" style="left:1393px;top:85px;font-size:14px;line-height:22px">결제</div>
  <div class="hl" style="left:1383px;top:114px;width:418px"></div>

  <div class="a g" style="left:1393px;top:122px;font-size:12px;line-height:20px">이전 미수금</div>
  <div class="a b" style="left:1456px;top:122px;font-size:12.500px;line-height:20px">0원</div>
  <div class="a g" style="left:1552px;top:122px;font-size:12px;line-height:20px">보유 예치금</div>
  <div class="a b" style="left:1615px;top:122px;font-size:12.500px;line-height:20px">0원</div>
  <div class="a g" style="left:1711px;top:122px;font-size:12px;line-height:20px">보유 포인트</div>
  <div class="a b" style="left:1773px;top:122px;font-size:12.500px;line-height:20px">0원</div>

  <div class="a" style="left:1393px;top:152px;font-size:12px;line-height:20px">결제일</div>
  <div class="a" style="left:1427px;top:150px;width:100px;height:25px;border:1px solid #cfd3df;border-radius:3px"></div>
  <div class="a" style="left:1434px;top:152px;font-size:12px;line-height:21px;letter-spacing:.2px">2026.02.27</div>
  <svg class="a" style="left:1505px;top:154px" width="17" height="17" viewBox="0 0 24 24"><path d="M19 4h-1V2h-2v2H8V2H6v2H5a2 2 0 0 0-2 2v14a2 2 0 0 0 2 2h14a2 2 0 0 0 2-2V6a2 2 0 0 0-2-2zm0 16H5V9h14zM7 11h2v2H7zm4 0h2v2h-2zm4 0h2v2h-2zM7 15h2v2H7zm4 0h2v2h-2zm4 0h2v2h-2z" fill="#c9cdd8"/></svg>
  <div class="a" style="left:1531px;top:152px;font-size:13px;line-height:21px">금요일 16:20</div>
  <svg class="a" style="left:1606px;top:154px" width="17" height="17" viewBox="0 0 24 24"><path d="M3 17.250V21h3.750L17.810 9.940l-3.750-3.750zM20.710 7.040a1 1 0 0 0 0-1.410l-2.340-2.340a1 1 0 0 0-1.410 0l-1.830 1.830 3.750 3.750z" fill="#6b7e95"/></svg>
  <div class="btn" style="left:1722px;top:150px;width:69px;height:25px;font-size:12px;line-height:24px">예치금 충전</div>

  <div class="a g" style="left:1500px;top:184px;font-size:12.500px;line-height:20px">원금액</div>
  <div class="a b" style="left:1500px;top:204px;font-size:13px;line-height:20px;letter-spacing:-.35px">225,800원</div>
  <svg class="a" style="left:1566px;top:203px" width="8" height="4" viewBox="0 0 8 4" fill="#6b7e95"><rect x="0" y="1" width="8" height="1.800" rx=".5"/></svg>
  <div class="a g" style="left:1584px;top:184px;font-size:12.500px;line-height:20px">총 할인</div>
  <div class="a b r" style="left:1584px;top:204px;font-size:13px;line-height:20px">0원</div>
  <svg class="a" style="left:1632px;top:202px" width="10" height="8" viewBox="0 0 10 8" fill="#6b7e95"><rect x="0" y=".200" width="10" height="1.800" rx=".5"/><rect x="0" y="5.400" width="10" height="1.800" rx=".5"/></svg>
  <div class="a g" style="left:1654px;top:184px;font-size:12.500px;line-height:20px;letter-spacing:-.2px">미수금을 제외한 청구 금액</div>
  <div class="a b" style="left:1654px;top:204px;font-size:13px;line-height:20px;letter-spacing:-.35px">225,800원</div>

  <div class="a" style="left:1397px;top:225px;width:390px;height:29px;border-radius:4px;background:#ecedf5"></div>
  <div class="a" style="left:1500px;top:229px;width:276px;text-align:right;font-size:12px;line-height:21px;color:#4d5d70">과세 <span class="b" style="font-size:13px;color:#1c1e24;letter-spacing:-.3px">225,800원</span> &nbsp; 면세 <span class="b" style="font-size:13px;color:#1c1e24;letter-spacing:-.3px">0원</span></div>

  <div class="a g" style="left:1549px;top:260px;font-size:12.500px;line-height:20px">청구 금액</div>
  <div class="a b" style="left:1549px;top:279px;font-size:13px;line-height:20px;letter-spacing:-.35px">225,800원</div>
  <svg class="a" style="left:1610px;top:274px" width="12" height="12" viewBox="0 0 12 12" fill="#6b7e95"><rect x="0" y="5.100" width="12" height="1.800" rx=".5"/><rect x="5.100" y="0" width="1.800" height="12" rx=".5"/></svg>
  <div class="a g" style="left:1628px;top:260px;font-size:12.500px;line-height:20px;letter-spacing:-.8px">추가 <span class="r">할인</span></div>
  <div class="a m" style="left:1628px;top:279px;font-size:13px;line-height:20px;color:#6b7e95">0원</div>
  <svg class="a" style="left:1679px;top:271px" width="17" height="17" viewBox="0 0 24 24"><path d="M3 17.250V21h3.750L17.810 9.940l-3.750-3.750zM20.710 7.040a1 1 0 0 0 0-1.410l-2.340-2.340a1 1 0 0 0-1.410 0l-1.830 1.830 3.750 3.750z" fill="#6b7e95"/></svg>
  <svg class="a" style="left:1710px;top:277px" width="10" height="8" viewBox="0 0 10 8" fill="#6b7e95"><rect x="0" y=".200" width="10" height="1.800" rx=".5"/><rect x="0" y="5.400" width="10" height="1.800" rx=".5"/></svg>
  <div class="a g" style="left:1731px;top:260px;font-size:12.500px;line-height:20px">총 금액</div>
  <div class="a b" style="left:1731px;top:279px;font-size:13px;line-height:20px;letter-spacing:-.35px">225,800원</div>

  <div class="a g" style="left:1579px;top:300px;font-size:12.500px;line-height:20px">총 금액</div>
  <div class="a b" style="left:1579px;top:319px;font-size:13.500px;line-height:20px;letter-spacing:-.3px">225,800원</div>
  <svg class="a" style="left:1650px;top:319px" width="8" height="4" viewBox="0 0 8 4" fill="#6b7e95"><rect x="0" y="1" width="8" height="1.800" rx=".5"/></svg>
  <div class="a g" style="left:1667px;top:300px;font-size:12.500px;line-height:20px">절사</div>
  <div class="a m" style="left:1667px;top:319px;font-size:13px;line-height:20px;color:#6b7e95">0원</div>
  <svg class="a" style="left:1701px;top:318px" width="10" height="8" viewBox="0 0 10 8" fill="#6b7e95"><rect x="0" y=".200" width="10" height="1.800" rx=".5"/><rect x="0" y="5.400" width="10" height="1.800" rx=".5"/></svg>
  <div class="a b" style="left:1722px;top:300px;font-size:12.500px;line-height:20px">받을 금액</div>
  <div class="a b" style="left:1722px;top:319px;font-size:14.500px;line-height:20px;letter-spacing:-.3px">225,800원</div>
  <div class="hl" style="left:1393px;top:346px;width:398px"></div>

  <div class="a b" style="left:1393px;top:353px;font-size:12px;line-height:20px">카드</div>
  <svg class="a" style="left:1458px;top:355px" width="17" height="17" viewBox="0 0 17 17"><circle cx="8.500" cy="8.500" r="8.500" fill="#6f87a2"/><path d="M8.500 4v9M4 8.500h9" stroke="#fff" stroke-width="1.800"/></svg>
  <div class="inp" style="left:1487px;top:353px;width:90px;height:25px"></div>
  <div class="a m" style="left:1494px;top:355px;font-size:12px;line-height:21px;color:#5a6a80">선택 안 함</div>
  <div class="tri" style="left:1558px;top:363px"></div>
  <svg class="a" style="left:1589px;top:357px" width="17" height="17" viewBox="0 0 17 17"><circle cx="8.500" cy="8.500" r="8.500" fill="#6f87a2"/><path d="M5 5l7 7M12 5l-7 7" stroke="#fff" stroke-width="1.800"/></svg>
  <div class="inp" style="left:1691px;top:353px;width:100px;height:25px"></div>
  <div class="a" style="left:1690px;top:355px;width:86px;text-align:right;font-size:13px;line-height:21px;letter-spacing:0">225,800</div>
  <div class="a" style="left:1777px;top:355px;font-size:11px;line-height:21px;color:#8a93a3">원</div>

  <div class="a b" style="left:1393px;top:386px;font-size:12px;line-height:20px">계좌 이체</div>
  <svg class="a" style="left:1458px;top:388px" width="17" height="17" viewBox="0 0 17 17"><circle cx="8.500" cy="8.500" r="8.500" fill="#6f87a2"/><path d="M8.500 4v9M4 8.500h9" stroke="#fff" stroke-width="1.800"/></svg>

  <div class="a b" style="left:1393px;top:422px;font-size:12px;line-height:20px">현금</div>
  <div class="inp" style="left:1691px;top:419px;width:100px;height:25px"></div>
  <div class="a" style="left:1700px;top:421px;width:76px;text-align:right;font-size:12px;line-height:21px">0</div>
  <div class="a" style="left:1777px;top:421px;font-size:11px;line-height:21px;color:#8a93a3">원</div>

  <div class="a b" style="left:1393px;top:455px;font-size:12px;line-height:20px">예치금</div>
  <div class="a" style="left:1691px;top:452px;width:100px;height:25px;border:1px solid #cfd3df;border-radius:3px"></div>
  <div class="a" style="left:1700px;top:454px;width:76px;text-align:right;font-size:12px;line-height:21px">0</div>
  <div class="a" style="left:1777px;top:454px;font-size:11px;line-height:21px;color:#c4c9d3">원</div>

  <div class="a b" style="left:1393px;top:488px;font-size:12px;line-height:20px">포인트</div>
  <div class="a" style="left:1691px;top:485px;width:100px;height:25px;border:1px solid #cfd3df;border-radius:3px"></div>
  <div class="a" style="left:1703px;top:487px;width:76px;text-align:right;font-size:12px;line-height:21px">0</div>
  <div class="a" style="left:1780px;top:487px;font-size:11px;line-height:21px;color:#c4c9d3">p</div>
  <div class="hl" style="left:1393px;top:517px;width:398px"></div>

  <div class="a b" style="left:1393px;top:525px;font-size:14px;line-height:22px;letter-spacing:-.7px">총 수납 금액</div>
  <div class="a b" style="left:1691px;top:525px;width:100px;text-align:right;font-size:15px;line-height:22px;letter-spacing:-.1px">225,800원</div>
  <div class="a b r" style="left:1393px;top:552px;font-size:14px;line-height:22px;letter-spacing:-.7px">미수금</div>
  <div class="a b r" style="left:1691px;top:552px;width:100px;text-align:right;font-size:15px;line-height:22px">0원</div>
  <div class="hl" style="left:1393px;top:580px;width:398px"></div>

  <div class="a b" style="left:1393px;top:587px;font-size:12px;line-height:20px;letter-spacing:-.6px">결제 특이사항</div>
  <div class="a" style="left:1476px;top:587px;width:315px;height:42px;border-radius:3px;background:#ecedf5"></div>
  <div class="a b" style="left:1393px;top:638px;font-size:12px;line-height:20px;letter-spacing:-.6px">수납담당자</div>
  <div class="inp" style="left:1476px;top:635px;width:100px;height:25px"></div>
  <div class="a m" style="left:1483px;top:637px;font-size:12px;line-height:21px;color:#5a6a80">벳칭</div>
  <div class="tri" style="left:1557px;top:645px"></div>
  <div class="cbg" style="left:1632px;top:638px"><svg width="19" height="19" viewBox="0 0 19 19"><path d="M5 10l3 3 6-6.500" fill="none" stroke="#6b7788" stroke-width="1.600"/></svg></div>
  <div class="a" style="left:1658px;top:638px;font-size:12px;line-height:20px;letter-spacing:-.7px">현금 영수증</div>
  <div class="cbg" style="left:1721px;top:638px"><svg width="19" height="19" viewBox="0 0 19 19"><path d="M5 10l3 3 6-6.500" fill="none" stroke="#6b7788" stroke-width="1.600"/></svg></div>
  <div class="a" style="left:1747px;top:638px;font-size:12px;line-height:20px;letter-spacing:-.7px">통계 활용</div>
  <div class="a" style="left:1693px;top:671px;width:98px;height:34px;border-radius:17px;background:#0896ff"></div>
  <svg class="a" style="left:1707px;top:679px" width="18" height="18" viewBox="0 0 24 24"><path d="M20 4H4a2 2 0 0 0-2 2v12a2 2 0 0 0 2 2h16a2 2 0 0 0 2-2V6a2 2 0 0 0-2-2zm0 14H4v-7h16zm0-10H4V6h16z" fill="#fff"/></svg>
  <div class="a b" style="left:1730px;top:677px;font-size:14.500px;line-height:22px;color:#fff;letter-spacing:-.4px">결제하기</div>

  <!-- divider -->
  <div class="a" style="left:124px;top:722px;width:1678px;height:2px;background:#cfd3df"></div>

  <!-- ===== panel 4 : 수납 내역 ===== -->
  <div class="panel" style="left:124px;top:729px;width:1678px;height:260px"></div>
  <div class="a b" style="left:136px;top:736px;font-size:14px;line-height:22px">수납 내역</div>
  <div class="hl" style="left:125px;top:764px;width:1676px"></div>
  <div class="a" style="left:130px;top:770px;width:1666px;height:213px;border:1px solid #cfd3df;border-radius:3px"></div>
  <div class="th" style="left:130px;top:770px;width:1666px;height:31px;border-radius:3px 3px 0 0"></div>
  <div class="a" style="left:1251px;top:771px;width:84px;height:29px;background:#fbb620"></div>
  <div class="a b" style="left:136px;top:776px;font-size:11px;line-height:20px;letter-spacing:-.6px">유형</div>
  <div class="vl" style="left:160px;top:771px;height:29px;background:#cfd3df"></div>
  <div class="a b" style="left:166px;top:776px;font-size:11px;line-height:20px;letter-spacing:-.6px">수납 일시</div>
  <div class="vl" style="left:245px;top:771px;height:29px;background:#cfd3df"></div>
  <div class="a b" style="left:251px;top:776px;font-size:11px;line-height:20px;letter-spacing:-.6px">원금액</div>
  <div class="vl" style="left:330px;top:771px;height:29px;background:#cfd3df"></div>
  <div class="a b" style="left:336px;top:776px;font-size:11px;line-height:20px;letter-spacing:-.6px">할인/할증</div>
  <div class="vl" style="left:420px;top:771px;height:29px;background:#cfd3df"></div>
  <div class="a b" style="left:426px;top:776px;font-size:11px;line-height:20px;letter-spacing:-.6px">추가 할인/할증</div>
  <div class="vl" style="left:495px;top:771px;height:29px;background:#cfd3df"></div>
  <div class="a b" style="left:501px;top:776px;font-size:11px;line-height:20px;letter-spacing:-.6px">절사</div>
  <div class="vl" style="left:545px;top:771px;height:29px;background:#cfd3df"></div>
  <div class="a b" style="left:551px;top:776px;font-size:11px;line-height:20px;letter-spacing:-.6px">미수금 청구</div>
  <div class="vl" style="left:625px;top:771px;height:29px;background:#cfd3df"></div>
  <div class="a b" style="left:631px;top:776px;font-size:11px;line-height:20px;letter-spacing:-.6px">청구 금액</div>
  <div class="vl" style="left:710px;top:771px;height:29px;background:#cfd3df"></div>
  <div class="a b" style="left:716px;top:776px;font-size:11px;line-height:20px;letter-spacing:-.6px">예치금 충전</div>
  <div class="vl" style="left:780px;top:771px;height:29px;background:#cfd3df"></div>
  <div class="a b" style="left:786px;top:776px;font-size:11px;line-height:20px;letter-spacing:-.6px">포인트 사용</div>
  <div class="vl" style="left:845px;top:771px;height:29px;background:#cfd3df"></div>
  <div class="a b" style="left:851px;top:776px;font-size:11px;line-height:20px;letter-spacing:-.6px">예치금 사용</div>
  <div class="vl" style="left:910px;top:771px;height:29px;background:#cfd3df"></div>
  <div class="a b" style="left:916px;top:776px;font-size:11px;line-height:20px;letter-spacing:-.6px">카드</div>
  <div class="vl" style="left:995px;top:771px;height:29px;background:#cfd3df"></div>
  <div class="a b" style="left:1001px;top:776px;font-size:11px;line-height:20px;letter-spacing:-.6px">계좌 이체</div>
  <div class="vl" style="left:1080px;top:771px;height:29px;background:#cfd3df"></div>
  <div class="a b" style="left:1086px;top:776px;font-size:11px;line-height:20px;letter-spacing:-.6px">현금</div>
  <div class="vl" style="left:1165px;top:771px;height:29px;background:#cfd3df"></div>
  <div class="a b" style="left:1171px;top:776px;font-size:11px;line-height:20px;letter-spacing:-.6px">합계</div>
  <div class="vl" style="left:1250px;top:771px;height:29px;background:#cfd3df"></div>
  <div class="a b" style="left:1256px;top:776px;font-size:11px;line-height:20px;letter-spacing:-.6px">결제 금액</div>
  <div class="vl" style="left:1335px;top:771px;height:29px;background:#cfd3df"></div>
  <div class="a b" style="left:1341px;top:776px;font-size:11px;line-height:20px;letter-spacing:-.6px">잔여 미수금</div>
  <div class="vl" style="left:1415px;top:771px;height:29px;background:#cfd3df"></div>
  <div class="a b" style="left:1421px;top:776px;font-size:11px;line-height:20px;letter-spacing:-.6px">포인트 적립</div>
  <div class="vl" style="left:1475px;top:771px;height:29px;background:#cfd3df"></div>
  <div class="a b" style="left:1481px;top:776px;font-size:11px;line-height:20px;letter-spacing:-.6px">현금 영수</div>
  <div class="vl" style="left:1525px;top:771px;height:29px;background:#cfd3df"></div>
  <div class="a b" style="left:1531px;top:776px;font-size:11px;line-height:20px;letter-spacing:-.6px">메모</div>
  <div class="vl" style="left:1744px;top:771px;height:29px;background:#cfd3df"></div>
  <div class="a b" style="left:1750px;top:776px;font-size:11px;line-height:20px;letter-spacing:-.6px">수납 담당</div>
</div></div>
<div class="ov"></div>
<!-- ===== dialog ===== -->
<div class="a" style="left:782.500px;top:257px;width:361.500px;height:514px;background:#fff;border-radius:8px">
<div class="a" style="left:-782.500px;top:-257px;width:0;height:0">
  <div class="a" style="left:794px;top:264px;font-size:14px;line-height:22px;letter-spacing:-.7px">청구서/영수증 롤프린터 출력</div>
  <svg class="a" style="left:1113px;top:267px" width="16" height="16" viewBox="0 0 16 16"><path d="M.800 .800l14.400 14.400M15.200 .800L.800 15.200" stroke="#5a6b7e" stroke-width="1.700"/></svg>
  <div class="hl" style="left:783px;top:292px;width:361px;background:#d9dce8"></div>

  <div class="obtn" style="left:798px;top:308px;width:47px;height:27px;font-size:12px;line-height:26.500px;border-color:#0896ff;color:#0896ff;font-weight:700">청구서</div>
  <div class="obtn" style="left:853px;top:308px;width:47px;height:27px;font-size:12px;line-height:26.500px;color:#8a96a8;font-weight:700">영수증</div>
  <div class="a" style="left:798px;top:345px;font-size:12.500px;line-height:20px;color:#8a96a8;letter-spacing:-.25px">* 청구서 내용엔 이전 미수금, 결제 정보가 표시되지 않습니다.</div>
  <div class="a" style="left:798px;top:365px;font-size:12.500px;line-height:20px;color:#8a96a8;letter-spacing:-.25px">* 수납 취소, 환불 내역은 출력에서 제외됩니다.</div>

  <div class="a b" style="left:798px;top:397px;font-size:12px;line-height:20px;Noneletter-spacing:-.75px">청구서 출력 방식</div>
  <div class="inp" style="left:921px;top:394px;width:207px;height:25px;background:#eceff7"></div>
  <div class="a b" style="left:928px;top:397px;font-size:12px;line-height:20px;color:#6b7a90;letter-spacing:-.75px">현재 청구서 출력</div>
  <div class="tri" style="left:1109px;top:404px"></div>

  <div class="a b" style="left:798px;top:432px;font-size:12px;line-height:20px;Noneletter-spacing:-.75px">청구 기간</div>
  <div class="inp" style="left:921px;top:429px;width:100px;height:25px;background:#eceff7"></div>
  <div class="a" style="left:926px;top:431px;font-size:12.500px;line-height:21px;letter-spacing:.2px">2026.02.25</div>
  <svg class="a" style="left:1000px;top:433px" width="17" height="17" viewBox="0 0 24 24"><path d="M19 4h-1V2h-2v2H8V2H6v2H5a2 2 0 0 0-2 2v14a2 2 0 0 0 2 2h14a2 2 0 0 0 2-2V6a2 2 0 0 0-2-2zm0 16H5V9h14zM7 11h2v2H7zm4 0h2v2h-2zm4 0h2v2h-2zM7 15h2v2H7zm4 0h2v2h-2zm4 0h2v2h-2z" fill="#62768c"/></svg>
  <div class="inp" style="left:1028px;top:429px;width:100px;height:25px;background:#eceff7"></div>
  <div class="a" style="left:1033px;top:431px;font-size:12.500px;line-height:21px;letter-spacing:.2px">2026.02.25</div>
  <svg class="a" style="left:1107px;top:433px" width="17" height="17" viewBox="0 0 24 24"><path d="M19 4h-1V2h-2v2H8V2H6v2H5a2 2 0 0 0-2 2v14a2 2 0 0 0 2 2h14a2 2 0 0 0 2-2V6a2 2 0 0 0-2-2zm0 16H5V9h14zM7 11h2v2H7zm4 0h2v2h-2zm4 0h2v2h-2zM7 15h2v2H7zm4 0h2v2h-2zm4 0h2v2h-2z" fill="#62768c"/></svg>

  <div class="a b" style="left:798px;top:467px;font-size:12px;line-height:20px;Noneletter-spacing:-.75px">분류 기준</div>
  <div class="inp" style="left:921px;top:464px;width:207px;height:25px;background:#eceff7"></div>
  <div class="a b" style="left:928px;top:467px;font-size:12px;line-height:20px;color:#6b7a90;letter-spacing:-.75px">날짜</div>
  <div class="tri" style="left:1109px;top:474px"></div>

  <div class="a b" style="left:798px;top:502px;font-size:12px;line-height:20px;Noneletter-spacing:-.75px">동물 선택</div>
  <div class="inp" style="left:921px;top:499px;width:207px;height:25px;background:#eceff7"></div>
  <div class="a b" style="left:928px;top:502px;font-size:12px;line-height:20px;color:#6b7a90;letter-spacing:-.75px">멍군스</div>
  <div class="tri" style="left:1109px;top:509px"></div>

  <div class="a b" style="left:798px;top:537px;font-size:12px;line-height:20px;Noneletter-spacing:-.75px">출력 채널</div>
  <div class="inp" style="left:921px;top:534px;width:207px;height:25px;background:#eceff7"></div>
  <div class="a b" style="left:928px;top:537px;font-size:12px;line-height:20px;color:#6b7a90;letter-spacing:-.75px">1층 접수처</div>
  <div class="tri" style="left:1109px;top:544px"></div>

  <!-- red highlight -->
  <div class="a" style="left:790px;top:562px;width:348px;height:160px;border:4px solid #e8181a"></div>
  <div class="a" style="left:1301px;top:77px;width:31px;height:31px;border:4px solid #e8181a"></div>
  <div class="cb" style="left:798px;top:569px;width:20px;height:20px"><svg width="20" height="20" viewBox="0 0 20 20"><path d="M5.500 10.500l3 3 6-6.500" fill="none" stroke="#fff" stroke-width="1.800"/></svg></div>
  <div class="a" style="left:824px;top:569px;font-size:12px;line-height:20px;letter-spacing:-.6px">안내 문구</div>
  <div class="a" style="left:1078px;top:569px;width:50px;text-align:right;font-size:12.500px;line-height:20px;color:#8a96a8;letter-spacing:0">11/90</div>
  <div class="inp" style="left:798px;top:599px;width:330px;height:25px;background:#eceff7"></div>
  <div class="a b" style="left:804px;top:601px;font-size:11.500px;line-height:20px;color:#6b7a90;letter-spacing:-.4px">환불규정테스트</div>
  <div class="tri" style="left:1109px;top:609px"></div>
  <div class="inp" style="left:798px;top:634px;width:330px;height:78px;background:#eceff7;border-radius:5px"></div>
  <div class="a" style="left:805px;top:641px;font-size:14px;line-height:22px;letter-spacing:-.5px">환불규정테스트입니다.</div>
  <!-- dropdown -->
  <div class="a" style="left:798px;top:634px;width:89px;height:60px;background:#fff;border-radius:4px;box-shadow:0 2px 10px rgba(40,50,80,.22),0 0 0 1px rgba(190,195,220,.8);overflow:hidden">
    <div class="a" style="left:0;top:30px;width:89px;height:30px;background:#d9dbe7"></div>
    <div class="a" style="left:8px;top:6px;font-size:12px;line-height:20px;Noneletter-spacing:-.75px">안내문구</div>
    <div class="a" style="left:8px;top:34px;font-size:12px;line-height:20px;letter-spacing:-.5px">환불규정테스트</div>
  </div>

  <div class="a" style="left:1026px;top:723px;width:46px;height:33px;border-radius:6px;background:#eceff7;text-align:center;font-size:13px;line-height:34px;color:#66778a;font-weight:700">취소</div>
  <div class="a" style="left:1082px;top:723px;width:46px;height:33px;border-radius:6px;background:#0896ff;text-align:center;font-size:13px;line-height:34px;color:#fff;font-weight:700">출력</div>
</div></div>
</body>
</html>
